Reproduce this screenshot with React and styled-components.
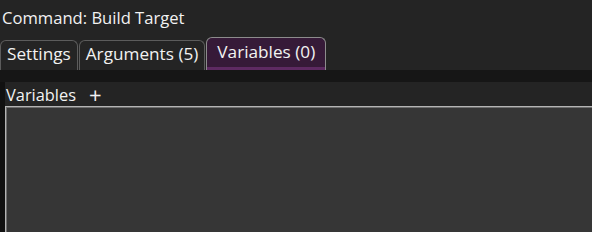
import React from 'react'
import styled, { createGlobalStyle } from 'styled-components'

const GlobalStyle = createGlobalStyle`
    html, body {
        margin: 0;
        padding: 0;
        background: #242424;
        overflow: hidden;
    }

    body {
        font-family: "Open Sans", "Noto Sans", sans-serif;
        color: #f2f2f2;
    }
`

const Window = styled.div`
    width: 592px;
    height: 232px;
    display: flex;
    flex-direction: column;
    background: #242424;
`

const Title = styled.div`
    height: 37px;
    padding: 7px 0 0 2px;
    box-sizing: border-box;
    font-size: 16.6px;
    line-height: 22px;
`

const TabStrip = styled.div`
    height: 33px;
    display: flex;
    align-items: flex-end;
    gap: 1px;
`

const Tab = styled.div`
    height: ${p => (p.active ? 33 : 30)}px;
    box-sizing: border-box;
    padding: ${p => (p.active ? '2px 10px 0' : '1px 6px 0')};
    border: 1px solid ${p => (p.active ? '#8c8c8c' : '#5c5c5c')};
    border-bottom: none;
    border-radius: 6px 6px 0 0;
    background: ${p => (p.active ? '#361a38' : '#242424')};
    box-shadow: ${p => (p.active ? 'inset 0 -3px 0 #5e2a62' : 'none')};
    font-size: 17.2px;
    line-height: 24px;
    white-space: nowrap;
`

const Band = styled.div`
    height: 12px;
    background: #161616;
`

const Body = styled.div`
    flex: 1;
    display: flex;
    background: #111111;
    padding-left: 5px;
`

const Panel = styled.div`
    flex: 1;
    display: flex;
    flex-direction: column;
    background: #242424;
`

const Header = styled.div`
    height: 24px;
    display: flex;
    align-items: center;
    gap: 13px;
    padding-left: 1px;
    font-size: 16.4px;
`

const AddButton = styled.span`
    font-size: 22px;
    line-height: 20px;
    font-weight: 400;
`

const ListBox = styled.div`
    flex: 1;
    background: #363636;
    border-top: 1px solid #b4b4b4;
    border-left: 1px solid #b4b4b4;
    box-shadow: inset 0 1px 0 #6e6e6e, inset 1px 0 0 #6e6e6e;
`

export default function App() {
    return (
        <>
            <GlobalStyle />
            <Window>
                <Title>Command: Build Target</Title>
                <TabStrip>
                    <Tab>Settings</Tab>
                    <Tab>Arguments (5)</Tab>
                    <Tab active>Variables (0)</Tab>
                </TabStrip>
                <Band />
                <Body>
                    <Panel>
                        <Header>
                            <span>Variables</span>
                            <AddButton>+</AddButton>
                        </Header>
                        <ListBox />
                    </Panel>
                </Body>
            </Window>
        </>
    )
}
